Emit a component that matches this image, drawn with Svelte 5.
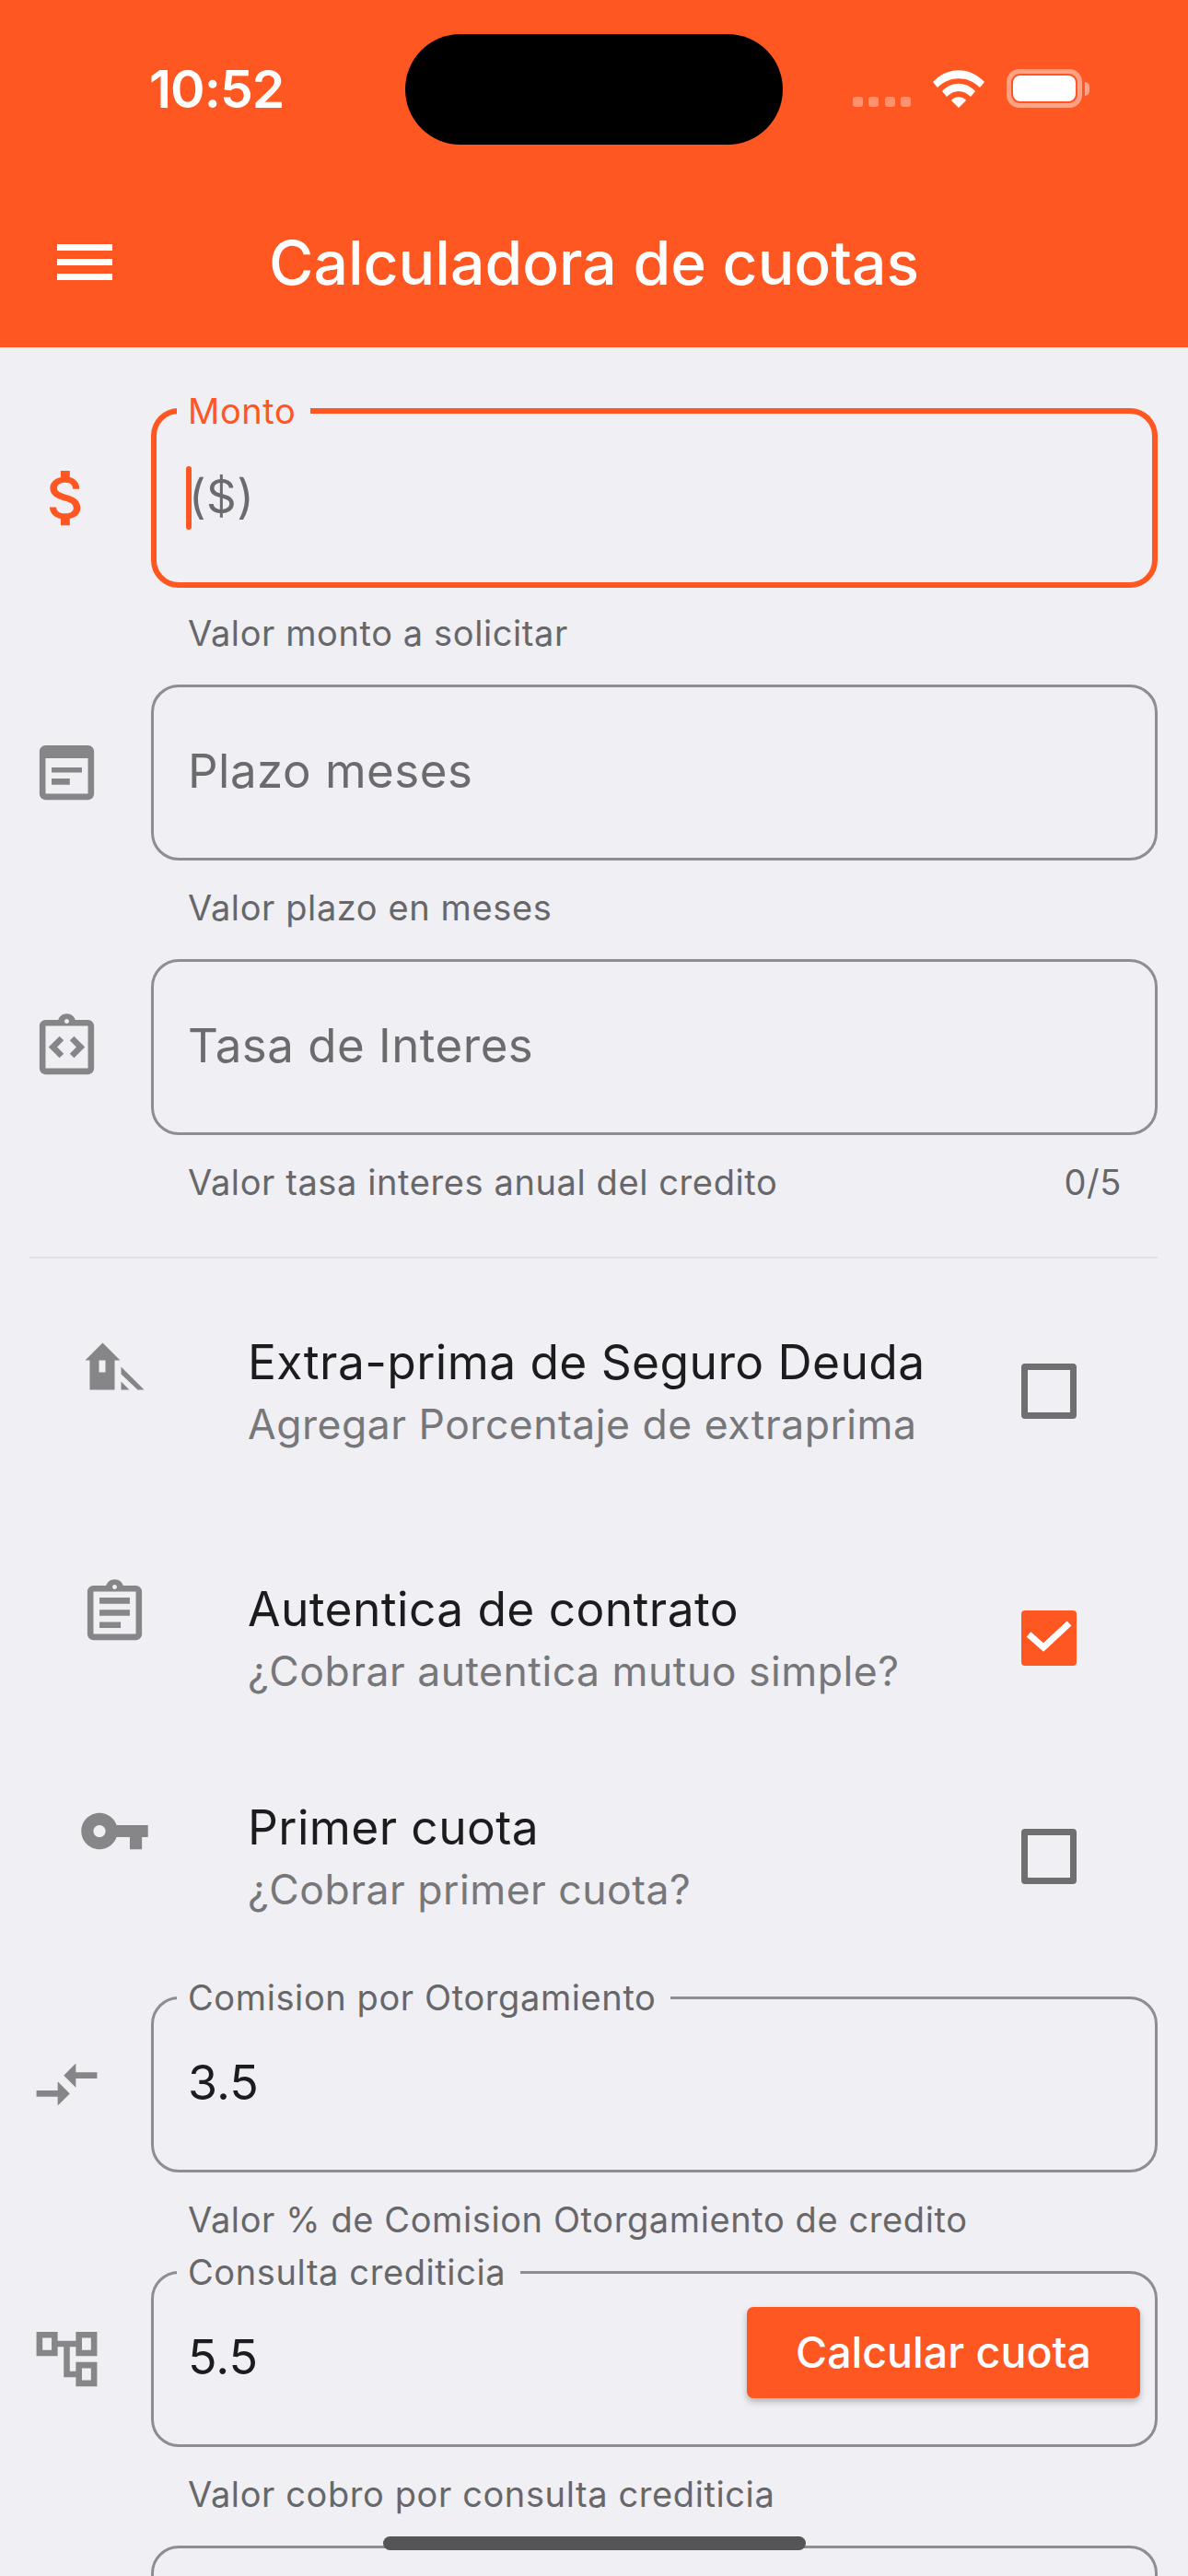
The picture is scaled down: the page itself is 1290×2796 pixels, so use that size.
<script>
  // Material-style glyphs on a 24 grid (the house one is hand-drawn and moved into the grid)
  const icons = {
    money: 'M11.8 10.9c-2.27-.59-3-1.2-3-2.15 0-1.09 1.01-1.85 2.7-1.85 1.78 0 2.44.85 2.5 2.1h2.21c-.07-1.72-1.12-3.3-3.21-3.81V3h-3v2.16c-1.94.42-3.5 1.68-3.5 3.61 0 2.31 1.91 3.46 4.7 4.13 2.5.6 3 1.48 3 2.41 0 .69-.49 1.79-2.7 1.79-2.06 0-2.87-.92-2.98-2.1h-2.2c.12 2.19 1.76 3.42 3.68 3.83V21h3v-2.15c1.95-.37 3.5-1.5 3.5-3.55 0-2.84-2.43-3.81-4.7-4.4z',
    note: 'M19 3H5c-1.1 0-2 .9-2 2v14c0 1.1.9 2 2 2h14c1.1 0 2-.9 2-2V5c0-1.1-.9-2-2-2zm0 16H5V7.3h14V19zM7 10.3h10V12H7zM7 14h6v2H7z',
    code: 'M19 3h-4.18C14.4 1.84 13.3 1 12 1s-2.4.84-2.82 2H5c-1.1 0-2 .9-2 2v14c0 1.1.9 2 2 2h14c1.1 0 2-.9 2-2V5c0-1.1-.9-2-2-2zm-7-.25c.41 0 .75.34.75.75s-.34.75-.75.75-.75-.34-.75-.75.34-.75.75-.75zM19 19H5V5h14v14zM11 14.17 8.83 12 11 9.83 9.59 8.41 6 12l3.59 3.59zM13 14.17 15.17 12 13 9.83l1.41-1.42L18 12l-3.59 3.59z',
    assignment: 'M19 3h-4.18C14.4 1.84 13.3 1 12 1s-2.4.84-2.82 2H5c-1.1 0-2 .9-2 2v14c0 1.1.9 2 2 2h14c1.1 0 2-.9 2-2V5c0-1.1-.9-2-2-2zm-7-.25c.41 0 .75.34.75.75s-.34.75-.75.75-.75-.34-.75-.75.34-.75.75-.75zM19 19H5V5h14v14zM7 7h10v2H7zM7 11h10v2H7zM7 15h7v2H7z',
    key: 'M12.65 10C11.83 7.67 9.61 6 7 6c-3.31 0-6 2.69-6 6s2.69 6 6 6c2.61 0 4.83-1.67 5.65-4H17v4h4v-4h2v-4H12.65zM7 14c-1.1 0-2-.9-2-2s.9-2 2-2 2 .9 2 2-.9 2-2 2z',
    compare: 'M9.01 14H2v2h7.01v3L13 15l-3.99-4v3zm5.98-1v-3H22V8h-7.01V5L11 9l3.99 4z',
    tree: 'M22 11V3h-7v3H9V3H2v8h7V8h2v10h4v3h7v-8h-7v3h-2V8h2v3h7zM7 9H4V5h3v4zm10 6h3v4h-3v-4zm0-10h3v4h-3V5z',
    house: 'M19 1 38 20H32V52H5V20H0ZM15 20v13h7V20ZM39 27 64 52H57L39 35ZM39 43 48 52H39Z'
  };

  const topFields = [
    { icon: 'money', label: 'Monto', placeholder: '($)', helper: 'Valor monto a solicitar', focused: true },
    { icon: 'note', placeholder: 'Plazo meses', helper: 'Valor plazo en meses' },
    { icon: 'code', placeholder: 'Tasa de Interes', helper: 'Valor tasa interes anual del credito', counter: '0/5' }
  ];

  const bottomFields = [
    { icon: 'compare', label: 'Comision por Otorgamiento', value: '3.5', helper: 'Valor % de Comision Otorgamiento de credito' },
    { icon: 'tree', label: 'Consulta crediticia', value: '5.5', helper: 'Valor cobro por consulta crediticia', action: 'Calcular cuota' },
    { icon: 'note', label: '', value: '', helper: '' }
  ];

  let options = $state([
    { icon: 'house', title: 'Extra-prima de Seguro Deuda', sub: 'Agregar Porcentaje de extraprima', checked: false },
    { icon: 'assignment', title: 'Autentica de contrato', sub: '¿Cobrar autentica mutuo simple?', checked: true },
    { icon: 'key', title: 'Primer cuota', sub: '¿Cobrar primer cuota?', checked: false }
  ]);
</script>

{#snippet glyph(name, cls)}
  <svg class="ico {cls}" viewBox="0 0 24 24" aria-hidden="true">
    {#if name === 'house'}
      <path transform="translate(2.27 4.1) scale(.304)" fill-rule="evenodd" d={icons.house} />
    {:else}
      <path fill-rule="evenodd" d={icons[name]} />
    {/if}
  </svg>
{/snippet}

{#snippet fieldRow(f)}
  <div class="row">
    {@render glyph(f.icon, f.focused ? 'accent' : '')}
    <div class="col">
      <div class="field" class:focused={f.focused}>
        {#if f.label}<span class="float-label">{f.label}</span>{/if}
        {#if f.focused}<span class="caret"></span>{/if}
        {#if f.value}
          <span class="value">{f.value}</span>
        {:else if f.placeholder}
          <span class="placeholder">{f.placeholder}</span>
        {/if}
        {#if f.action}<button class="action">{f.action}</button>{/if}
      </div>
      <div class="helper">
        <span>{f.helper}</span>
        {#if f.counter}<span class="counter">{f.counter}</span>{/if}
      </div>
    </div>
  </div>
{/snippet}

<div class="page">
  <header class="appbar">
    <div class="status">
      <span class="time">10:52</span>
      <div class="status-icons">
        <div class="dots"><i></i><i></i><i></i><i></i></div>
        <svg class="wifi" viewBox="0 0 56 41" aria-hidden="true">
          <path d="M0 13C16-4 40-4 56 13L51 19C38 6 18 6 5 19Z" />
          <path d="M10 23C20 12 36 12 46 23L41 29C33 21 23 21 15 29Z" />
          <path d="M20 33C24 28 32 28 36 33L28 41Z" />
        </svg>
        <div class="battery"><div class="battery-fill"></div></div>
        <span class="battery-nub"></span>
      </div>
    </div>
    <div class="notch"></div>
    <div class="toolbar">
      <div class="menu"><i></i><i></i><i></i></div>
      <h1>Calculadora de cuotas</h1>
    </div>
  </header>

  <main class="content">
    {#each topFields as f}
      {@render fieldRow(f)}
    {/each}

    <hr class="divider" />

    <div class="options">
      {#each options as opt, i}
        <label class="option">
          {@render glyph(opt.icon, 'lead')}
          <div class="option-text">
            <div class="option-title">{opt.title}</div>
            <div class="option-sub">{opt.sub}</div>
          </div>
          <input type="checkbox" bind:checked={options[i].checked} />
          <span class="box" class:on={opt.checked}>
            {#if opt.checked}
              <svg viewBox="0 0 60 60" aria-hidden="true"><path d="M8 26 24 40 52 14" /></svg>
            {/if}
          </span>
        </label>
      {/each}
    </div>

    {#each bottomFields as f}
      {@render fieldRow(f)}
    {/each}
  </main>

  <div class="home-bar"></div>
</div>

<style>
  :global(body) { margin: 0; background: #efeff4; }

  .page {
    position: relative;
    width: 1290px;
    height: 2796px;
    overflow: hidden;
    background: #efeff4;
    font-family: Inter, "Noto Sans", sans-serif;
    color: #1c1c1e;
  }

  /* app bar */
  .appbar { position: relative; height: 377px; background: #ff5722; color: #fff; }
  .status { display: flex; align-items: center; justify-content: space-between; height: 192px; padding: 0 107px 0 162px; }
  .time { font-size: 57px; font-weight: 600; letter-spacing: -1px; }
  .status-icons { display: flex; align-items: center; }
  .dots { display: flex; gap: 6.5px; margin: 28px 24px 0 0; }
  .dots i { width: 11px; height: 11px; border-radius: 3px; background: rgba(255,255,255,.35); }
  .wifi { width: 56px; height: 41px; fill: #fff; margin-right: 24px; }
  .battery { box-sizing: border-box; width: 82px; height: 42px; padding: 2px; border: 5px solid rgba(255,255,255,.45); border-radius: 14px; }
  .battery-fill { height: 100%; background: #fff; border-radius: 8px; }
  .battery-nub { width: 5px; height: 15px; margin-left: 3px; background: rgba(255,255,255,.45); border-radius: 0 8px 8px 0; }
  .notch { position: absolute; left: 440px; top: 37px; width: 410px; height: 120px; border-radius: 60px; background: #000; }

  .toolbar { display: flex; align-items: center; height: 185px; padding-left: 62px; }
  .menu { display: flex; flex-direction: column; gap: 9px; width: 60px; }
  .menu i { height: 7px; background: #fff; }
  h1 { margin: 0 0 0 170px; font-size: 66px; font-weight: 500; letter-spacing: 0; white-space: nowrap; }

  /* form rows */
  .content { padding: 68px 33px 0 0; }
  .row { display: flex; }
  .col { flex: 1; min-width: 0; }
  .ico { flex: none; width: 79px; height: 79px; fill: #868688; }
  .row > .ico { margin: 56px 52px 0 33px; }
  .ico.accent { fill: #ff5722; }

  .field {
    position: relative;
    display: flex;
    align-items: center;
    box-sizing: border-box;
    height: 191px;
    padding: 0 16px 0 37px;
    border: 3px solid #8e8e90;
    border-radius: 30px;
  }
  .field.focused { height: 195px; margin: -2px 0; border: 6px solid #ff5722; padding-left: 34px; }
  .float-label {
    position: absolute;
    left: 25px;
    top: -2px;
    transform: translateY(-50%);
    padding: 0 16px 0 12px;
    background: #efeff4;
    font-size: 38px;
    letter-spacing: .6px;
    line-height: 44px;
    color: #67676a;
    white-space: nowrap;
  }
  .focused .float-label { left: 22px; top: -3px; color: #ff5722; }
  .caret { width: 6px; height: 69px; margin: 0 -3px 0 -2px; border-radius: 3px; background: #ff5722; }
  .placeholder { padding-bottom: 4px; font-size: 51px; letter-spacing: 0.5px; color: #6b6b6e; }
  .value { padding-bottom: 4px; font-size: 52px; color: #1c1c1e; }
  .action {
    margin: 0 0 15px auto;
    width: 427px;
    height: 99px;
    padding: 0;
    border: none;
    border-radius: 7px;
    background: #ff5722;
    box-shadow: 0 4px 7px rgba(0,0,0,.25);
    color: #fff;
    font-family: inherit;
    font-size: 46.5px;
    font-weight: 500;
  }

  .helper {
    display: flex;
    justify-content: space-between;
    box-sizing: border-box;
    height: 107px;
    padding: 29px 39px 0 40px;
    font-size: 38px;
    letter-spacing: .6px;
    line-height: 44px;
    color: #67676a;
  }

  .divider { height: 2px; margin: 25px 0 0 32px; border: none; background: #e2e2e6; }

  /* switches with icon */
  .options { display: flex; flex-direction: column; margin-top: 26px; margin-bottom: 34px; }
  .option { position: relative; display: flex; align-items: center; height: 236px; padding-right: 88px; }
  .option + .option { margin-top: 1px; }
  .option:nth-child(2) { margin-top: 32px; }
  .ico.lead { margin: 0 0 56px 85px; }
  .option-text { flex: 1; margin-left: 105px; padding-top: 3px; }
  .option-title { font-size: 51.5px; line-height: 68px; color: #1c1c1e; letter-spacing: .4px; }
  .option-sub { font-size: 44.5px; line-height: 68px; color: #77777a; letter-spacing: .5px; }
  .option input { position: absolute; opacity: 0; pointer-events: none; }
  .box { display: block; box-sizing: border-box; width: 60px; height: 60px; border: 7px solid #6f6f72; border-radius: 4px; }
  .box.on { border: none; background: #ff5722; }
  .box svg { display: block; width: 60px; height: 60px; fill: none; stroke: #fff; stroke-width: 7; }

  .home-bar { position: absolute; left: 416px; top: 2753px; width: 459px; height: 15px; border-radius: 8px; background: #555557; }
</style>
